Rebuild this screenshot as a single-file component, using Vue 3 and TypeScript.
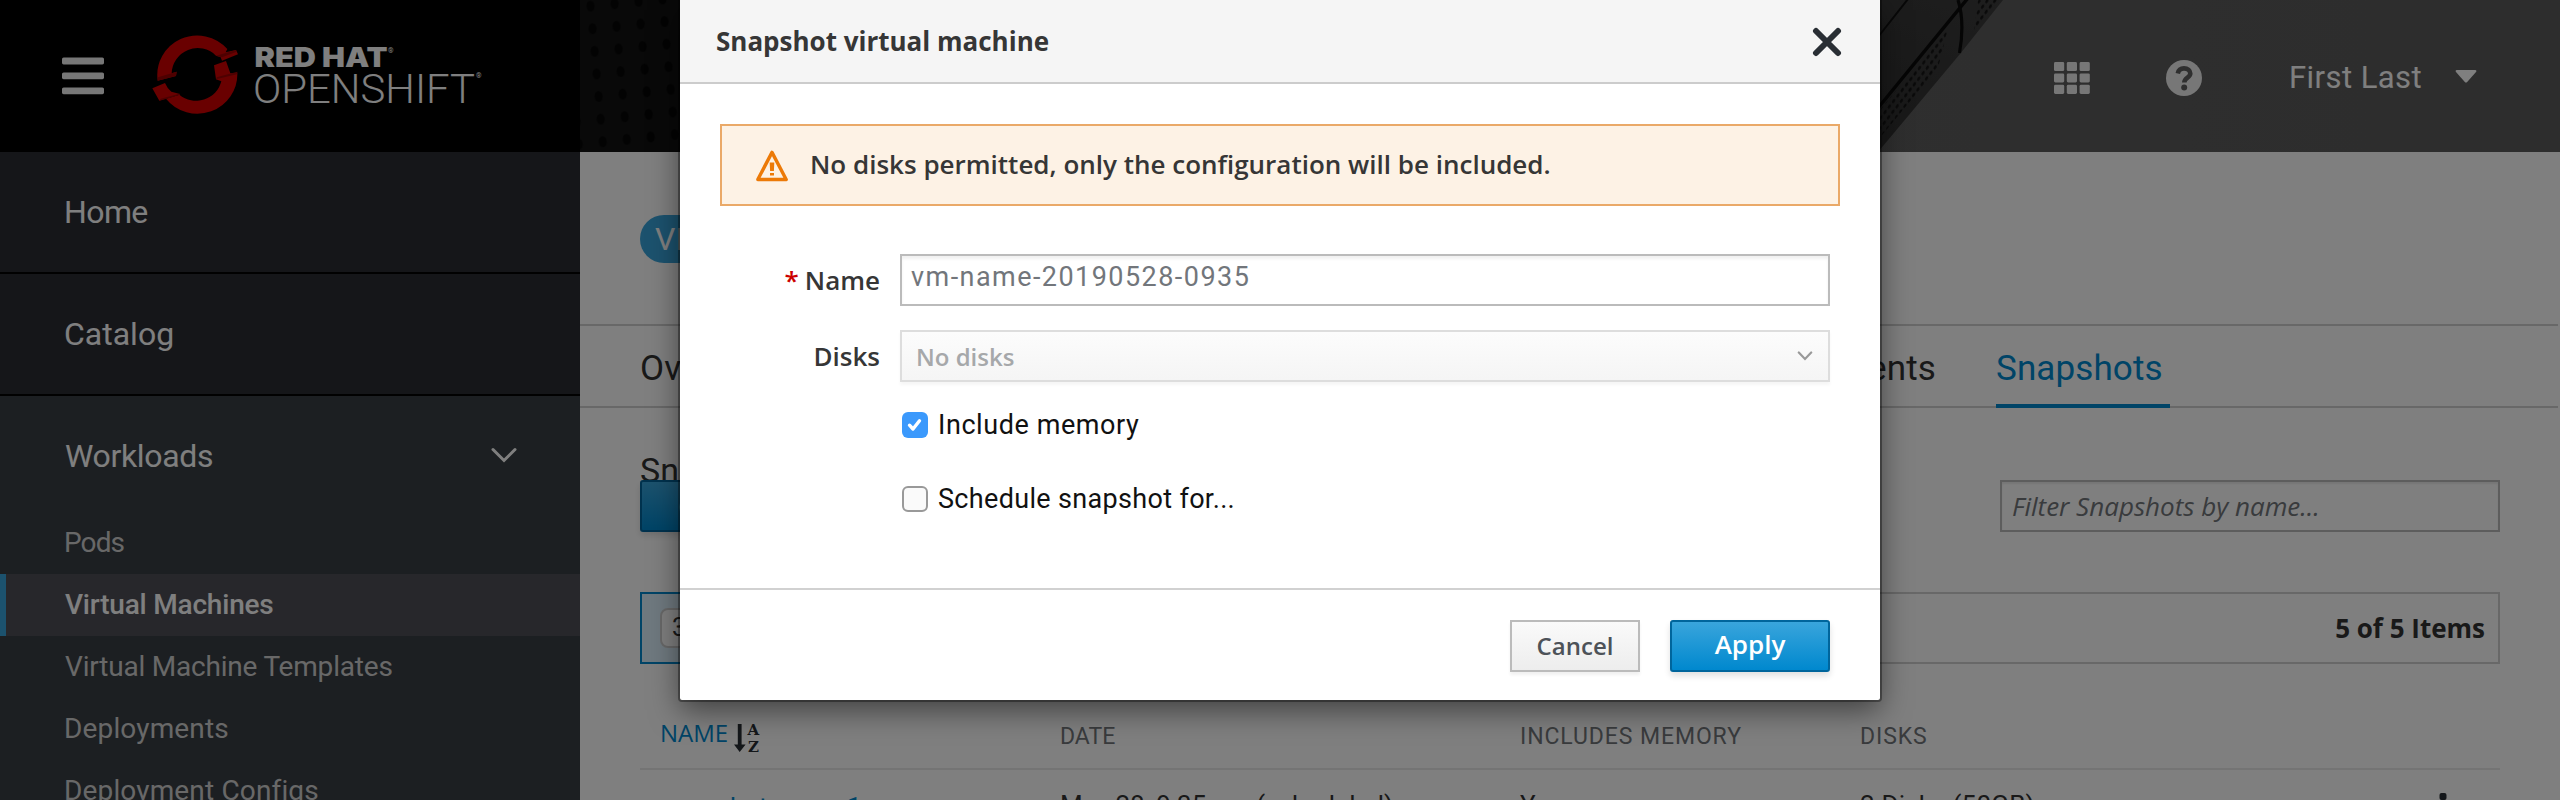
<script setup lang="ts">
import { ref } from 'vue'

interface NavChild {
  label: string
  active?: boolean
  tracking: string
}

const workloads: NavChild[] = [
  { label: 'Pods', tracking: 'tight' },
  { label: 'Virtual Machines', active: true, tracking: 'snug' },
  { label: 'Virtual Machine Templates', tracking: 'snug' },
  { label: 'Deployments', tracking: 'loose' },
  { label: 'Deployment Configs', tracking: 'loose' },
]

const name = ref('vm-name-20190528-0935')
const includeMemory = ref(true)
const schedule = ref(false)

const cells = [0, 1, 2].flatMap((r) => [0, 1, 2].map((c) => ({ x: c * 12.8, y: r * 11.4 })))
</script>

<template>
  <div class="app">
    <header class="masthead">
      <div class="brand">
        <svg class="burger" width="42" height="38" viewBox="0 0 42 38">
          <rect y="0.6" width="42" height="6.8" rx="1.6" />
          <rect y="15.4" width="42" height="6.8" rx="1.6" />
          <rect y="30.4" width="42" height="6.8" rx="1.6" />
        </svg>
        <svg class="logo" width="340" height="90" viewBox="0 0 340 90">
          <g transform="translate(-12 -10) scale(0.33333)">
            <path fill="#d20000" d="M53 182A120 119 0 0 1 262 87L257 97L288 90L294 103L246 122L242 112L228 107A78 78 0 0 0 95 160L110 155L108 168Z" />
            <path fill="#d20000" d="M292 158A120 119 0 0 1 78 236L118 224A78 78 0 0 0 244 184L228 178L222 136L258 123L271 160Z" />
            <path fill="#d20000" d="M37 205L75 189Q82 206 94 215L120 222L58 242Z" />
            <path fill="#9c0000" d="M53 182L54 172L110 155L108 168Z" />
            <path fill="#9c0000" d="M228 178L230 172L292 155L291 163Z" />
            <path fill="#9c0000" d="M228 107L288 90L290 95L246 112Z" />
            <path fill="#9c0000" d="M58 242L62 236L118 221L120 224L78 237Z" />
          </g>
          <g transform="translate(-152 -30)" fill="#fff">
            <text class="logo-bold" x="254.5" y="67.3" textLength="133" lengthAdjust="spacingAndGlyphs">RED HAT</text>
            <text class="logo-light" x="253" y="102.5" textLength="222" lengthAdjust="spacingAndGlyphs">OPENSHIFT</text>
            <text class="logo-mark" x="388" y="52.5">®</text>
            <text class="logo-mark" x="476" y="78">®</text>
          </g>
        </svg>
      </div>
      <div class="tools">
        <svg class="backdrop" width="1980" height="152" viewBox="0 0 1980 152">
          <defs>
            <pattern id="dots" width="24" height="22.6" patternUnits="userSpaceOnUse" patternTransform="matrix(1 -0.1 0.09 1 -2.5 -4)">
              <ellipse cx="12" cy="11.3" rx="4" ry="5.4" fill="#060606" />
            </pattern>
            <pattern id="holes" width="7" height="6" patternUnits="userSpaceOnUse" patternTransform="rotate(-52) skewX(-18)">
              <rect x="1" y="1.4" width="4.4" height="2.6" rx="1.3" fill="#141414" />
            </pattern>
            <linearGradient id="sky" x1="0" x2="1" y1="0" y2="0">
              <stop offset="0" stop-color="#646464" />
              <stop offset="0.4" stop-color="#5e5e5e" />
              <stop offset="1" stop-color="#5a5a5a" />
            </linearGradient>
            <linearGradient id="wall" x1="0" x2="1" y1="1" y2="0">
              <stop offset="0" stop-color="#2a2a2a" />
              <stop offset="1" stop-color="#3c3c3c" />
            </linearGradient>
          </defs>
          <rect width="700" height="152" fill="#121212" />
          <rect width="700" height="152" fill="url(#dots)" />
          <rect x="700" width="1280" height="152" fill="url(#sky)" />
          <g transform="translate(1290 0)">
            <path fill="url(#wall)" d="M-200 0H133L90 54L8 152H-200Z" />
            <path fill="url(#holes)" d="M78 28L68 68L8 140V112Z" />
            <path fill="url(#holes)" d="M108 0H130L104 32Z" />
            <path d="M98 -2L8 108" stroke="#0a0a0a" stroke-width="3.4" fill="none" />
            <path d="M38 -1L8 37" stroke="#101010" stroke-width="2" fill="none" />
            <path d="M88 0Q95 22 89.500 53" stroke="#0a0a0a" stroke-width="3.2" fill="none" />
          </g>
        </svg>
        <svg class="grid-icon" width="36" height="32" viewBox="0 0 36 32">
          <rect v-for="(c, i) in cells" :key="i" :x="c.x" :y="c.y" width="10.2" height="9.1" rx="1.4" />
        </svg>
        <svg class="help-icon" width="36" height="36" viewBox="0 0 36 36">
          <circle cx="18" cy="18" r="18" fill="#efefef" />
          <path d="M11.800 13.400C12.600 9.800 15 8.400 18 8.400C21.600 8.400 24.300 10.500 24.300 13.600C24.300 17.600 18.300 17.600 18.300 22.400" fill="none" stroke="#5e5e5e" stroke-width="4.600" />
          <circle cx="18.200" cy="27.600" r="3" fill="#5e5e5e" />
        </svg>
        <span class="user">First Last</span>
        <svg class="caret" width="22" height="13" viewBox="0 0 22 13">
          <path d="M1.500 0H20.500Q22 0.400 21.200 1.800L12.200 12Q11 13 9.800 12L0.800 1.800Q0 0.400 1.500 0Z" fill="#fff" />
        </svg>
      </div>
    </header>

    <div class="body">
      <nav class="sidebar">
        <a class="nav-item snugger">Home</a>
        <a class="nav-item">Catalog</a>
        <div class="nav-open">
          <div class="nav-title">
            <span>Workloads</span>
            <svg width="26" height="16" viewBox="0 0 26 16">
              <path d="M2 2.500L13 13.500L24 2.500" fill="none" stroke="#fff" stroke-width="3" stroke-linecap="round" />
            </svg>
          </div>
          <a v-for="n in workloads" :key="n.label" class="nav-child" :class="[n.tracking, { active: n.active }]">{{ n.label }}</a>
        </div>
      </nav>

      <main class="content">
        <div class="resource"><span class="badge">VM</span></div>
        <div class="tabs">
          <span class="tab">Overview</span>
          <span class="tab events">Events</span>
          <span class="tab current">Snapshots</span>
        </div>
        <div class="pane">
          <h2 class="heading">Snapshots</h2>
          <div class="toolbar">
            <span class="create">Create Snapshot</span>
            <span class="filter">Filter Snapshots by name...</span>
          </div>
          <div class="summary">
            <div class="summary-left"><span class="chip">3</span></div>
            <b class="count">5 of 5 Items</b>
          </div>
          <div class="grid thead">
            <div class="sorted">
              <span>NAME</span>
              <svg width="28" height="30" viewBox="0 0 28 30">
                <path d="M3.800 1H7.600V21.500H11.600L5.700 29L0 21.500H3.800Z" />
                <text x="13.500" y="12">A</text>
                <text x="14" y="29">Z</text>
              </svg>
            </div>
            <span>DATE</span>
            <span class="wide">INCLUDES MEMORY</span>
            <span class="wide">DISKS</span>
          </div>
          <div class="grid row">
            <a class="link">snapshot-name-1</a>
            <span>May 28, 9:35 am (scheduled)</span>
            <span>Yes</span>
            <span class="disks">2 Disks (50GB)</span>
            <svg class="kebab" width="8" height="34" viewBox="0 0 8 34">
              <rect x="0.500" width="7" height="7" rx="2" />
              <rect x="0.500" y="13" width="7" height="7" rx="2" />
              <rect x="0.500" y="26" width="7" height="7" rx="2" />
            </svg>
          </div>
        </div>
      </main>
    </div>

    <div class="overlay">
      <section class="modal">
        <div class="modal-head">
          <h1>Snapshot virtual machine</h1>
          <svg width="30" height="30" viewBox="0 0 30 30">
            <path d="M4 4L26 26M26 4L4 26" stroke="#292e34" stroke-width="6" stroke-linecap="round" />
          </svg>
        </div>
        <div class="modal-body">
          <div class="alert">
            <svg width="32" height="32" viewBox="0 0 32 32">
              <path d="M16 2.400L30.200 29.500H1.800Z" fill="none" stroke="#ec7a08" stroke-width="3.400" stroke-linejoin="round" />
              <path d="M13.700 12.500H18.300L17.900 21H14.100ZM14 23H18V25.600H14Z" fill="#ec7a08" />
            </svg>
            <span>No disks permitted, only the configuration will be included.</span>
          </div>
          <div class="field">
            <label><i>*</i>Name</label>
            <div class="input">{{ name }}</div>
          </div>
          <div class="field">
            <label>Disks</label>
            <div class="select">
              <span>No disks</span>
              <svg width="16" height="10" viewBox="0 0 16 10">
                <path d="M1.800 1.500L8 8L14.200 1.500" fill="none" stroke="#999" stroke-width="2.200" stroke-linecap="round" />
              </svg>
            </div>
          </div>
          <div class="checks">
            <div class="check" @click="includeMemory = !includeMemory">
              <span class="box" :class="{ on: includeMemory }">
                <svg v-if="includeMemory" width="26" height="26" viewBox="0 0 26 26">
                  <path d="M7.500 13.200L11 17L17.500 8.800" fill="none" stroke="#fff" stroke-width="3.400" stroke-linecap="round" stroke-linejoin="round" />
                </svg>
              </span>
              <span class="memory">Include memory</span>
            </div>
            <div class="check" @click="schedule = !schedule">
              <span class="box" :class="{ on: schedule }"></span>
              <span class="schedule">Schedule snapshot for...</span>
            </div>
          </div>
        </div>
        <div class="modal-foot">
          <button class="btn cancel">Cancel</button>
          <button class="btn apply">Apply</button>
        </div>
      </section>
    </div>
  </div>
</template>

<style>
body {
  overflow: hidden;
}
</style>

<style scoped>
.app {
  position: relative;
  width: 2560px;
  height: 800px;
  overflow: hidden;
  background: #fff;
  font-family: Roboto, sans-serif;
  color: #333;
}
svg {
  display: block;
  flex: none;
}
.app * {
  box-sizing: border-box;
}
.masthead {
  display: flex;
  height: 152px;
}
.brand {
  display: flex;
  align-items: flex-start;
  width: 580px;
  padding-left: 62px;
  background: #000;
}
.burger {
  margin-top: 57px;
  fill: #efefef;
}
.logo {
  margin: 30px 0 0 48px;
}
.logo-bold {
  font: 900 26.8px Inter, sans-serif;
}
.logo-light {
  font: 300 40px Roboto, sans-serif;
}
.logo-mark {
  font: 400 7px Roboto, sans-serif;
}
.tools {
  position: relative;
  display: flex;
  flex: 1;
  align-items: center;
  justify-content: flex-end;
  padding: 3px 83px 0 0;
}
.backdrop {
  position: absolute;
  left: 0;
  top: 0;
}
.grid-icon,
.help-icon,
.user,
.caret {
  position: relative;
}
.grid-icon {
  fill: #efefef;
}
.help-icon {
  margin-left: 76px;
}
.user {
  width: 140px;
  margin: 0 26px 0 87px;
  font-size: 31px;
  line-height: 40px;
  letter-spacing: 0.44px;
  color: #fff;
  white-space: nowrap;
}
.caret {
  margin-bottom: 3px;
}
.body {
  display: flex;
  height: 648px;
}
.sidebar {
  width: 580px;
  background: #2b2c33;
  color: #fff;
  overflow: hidden;
}
.nav-item {
  display: block;
  height: 122px;
  padding-left: 64px;
  border-bottom: 2px solid #030303;
  font-size: 32px;
  line-height: 120px;
}
.snugger {
  letter-spacing: -0.6px;
}
.nav-open {
  background: #393f44;
}
.nav-title {
  display: flex;
  align-items: center;
  justify-content: space-between;
  height: 116px;
  padding: 4px 63px 0 65px;
  font-size: 32px;
  letter-spacing: -0.35px;
}
.nav-title svg {
  margin-bottom: 2px;
}
.nav-child {
  display: block;
  height: 62px;
  padding-left: 64px;
  font-size: 28px;
  line-height: 62px;
  color: #d1d1d1;
}
.nav-child.tight {
  letter-spacing: -0.9px;
}
.nav-child.snug {
  padding-left: 65px;
  letter-spacing: -0.2px;
}
.nav-child.loose {
  letter-spacing: 0.15px;
}
.nav-child.active {
  padding-left: 59px;
  border-left: 6px solid #39a5dc;
  background: #4e4e56;
  color: #fff;
  font-weight: 500;
}
.content {
  flex: 1;
}
.resource {
  height: 174px;
  margin-right: 2px;
  padding: 63px 0 0 60px;
  border-bottom: 2px solid #d1d1d1;
}
.badge {
  display: block;
  width: 90px;
  height: 48px;
  padding-left: 15px;
  border-radius: 24px;
  background: #39a5dc;
  color: #fff;
  font-size: 32px;
  line-height: 49px;
}
.tabs {
  display: flex;
  height: 82px;
  margin-right: 2px;
  padding: 0 388px 0 60px;
  border-bottom: 2px solid #d1d1d1;
  font-size: 35px;
  line-height: 86px;
  letter-spacing: 0.12px;
}
.tab {
  height: 82px;
}
.events {
  margin: 0 60px 0 auto;
}
.current {
  width: 174px;
  border-bottom: 4px solid #0088ce;
  color: #0088ce;
}
.pane {
  padding: 0 60px;
}
.heading {
  height: 72px;
  margin: 0;
  overflow: hidden;
  font-size: 34px;
  font-weight: 400;
  line-height: 124px;
}
.toolbar {
  display: flex;
  justify-content: space-between;
  height: 52px;
}
.create {
  padding: 0 36px;
  border: 2px solid #00659c;
  border-radius: 3px;
  background: linear-gradient(#39a5dc, #0088ce);
  box-shadow: 0 4px 6px rgba(3, 3, 3, 0.12);
  color: #fff;
  font: 600 26px/48px 'Open Sans', sans-serif;
}
.filter {
  width: 500px;
  padding-left: 10px;
  border: 2px solid #bbb;
  box-shadow: inset 0 2px 2px rgba(3, 3, 3, 0.08);
  color: #72767b;
  font: italic 400 26px/48px 'Open Sans', sans-serif;
}
.summary {
  display: flex;
  justify-content: space-between;
  height: 72px;
  margin-top: 60px;
  border: 2px solid #d1d1d1;
  border-left: 0;
}
.summary-left {
  width: 300px;
  height: 72px;
  margin-top: -2px;
  padding: 14px 18px;
  border: 2px solid #0088ce;
  background: #def3ff;
}
.chip {
  display: block;
  width: 90px;
  height: 40px;
  padding-left: 10px;
  border: 2px solid #d1d1d1;
  border-radius: 8px;
  background: #fff;
  font-size: 25px;
  line-height: 36px;
}
.count {
  padding-right: 13px;
  font: 700 26px/69px 'Open Sans', sans-serif;
}
.grid {
  display: grid;
  grid-template-columns: 400px 460px 340px 1fr 61px;
  padding-left: 20px;
  white-space: nowrap;
}
.thead {
  height: 106px;
  padding-top: 40px;
  border-bottom: 2px solid #e8e8e8;
  color: #72767b;
  font-size: 23px;
  line-height: 66px;
}
.thead > .wide {
  letter-spacing: 0.9px;
}
.sorted {
  display: flex;
  gap: 7px;
}
.sorted span {
  color: #0088ce;
  font: 400 24px/58px 'Open Sans', sans-serif;
}
.sorted svg {
  margin: 19px 0 0 -1px;
  fill: #292e34;
  font: 700 15px 'DejaVu Serif', serif;
}
.row {
  font-size: 26px;
  line-height: 71px;
}
.link {
  color: #0088ce;
  line-height: 74px;
}
.disks {
  letter-spacing: 0.2px;
}
.kebab {
  margin-top: 23px;
  fill: #292e34;
}
.overlay {
  position: absolute;
  inset: 0;
  background: rgba(0, 0, 0, 0.5);
}
.modal {
  width: 1200px;
  height: 700px;
  margin: 0 auto;
  background: #fff;
  border-radius: 0 0 2px 2px;
  box-shadow: 0 0 0 2px rgba(0, 0, 0, 0.35), 0 10px 30px rgba(0, 0, 0, 0.5);
  color: #363636;
  font-family: 'Open Sans', sans-serif;
}
.modal-head {
  display: flex;
  justify-content: space-between;
  height: 84px;
  padding: 0 38px 0 36px;
  border-bottom: 2px solid #ccc;
  background: #f5f5f5;
}
.modal-head h1 {
  margin: 0;
  font-size: 26px;
  font-weight: 700;
  line-height: 82px;
}
.modal-head svg {
  margin-top: 27px;
}
.modal-body {
  height: 504px;
  padding: 40px 50px 0 40px;
}
.alert {
  display: flex;
  gap: 22px;
  width: 1120px;
  height: 82px;
  margin-bottom: 48px;
  padding-left: 34px;
  border: 2px solid #eaa968;
  background: #fdf2e5;
  font-size: 26px;
  font-weight: 600;
  line-height: 77px;
}
.alert svg {
  margin-top: 24px;
}
.field {
  display: flex;
  justify-content: flex-end;
  gap: 20px;
  height: 52px;
  margin-bottom: 24px;
}
.field label {
  font-size: 26px;
  font-weight: 600;
  line-height: 52px;
}
.field i {
  margin-right: 6px;
  color: #c00;
  font-style: normal;
}
.input,
.select {
  width: 930px;
  border: 2px solid #bbb;
}
.input {
  padding-left: 9px;
  box-shadow: inset 0 3px 3px rgba(3, 3, 3, 0.06);
  color: #72767b;
  font: 400 27px/42px Roboto, sans-serif;
  letter-spacing: 1.45px;
}
.select {
  display: flex;
  align-items: center;
  justify-content: space-between;
  padding: 0 15px 0 14px;
  border-color: #ddd;
  background: linear-gradient(#fcfcfc, #f5f5f5);
  box-shadow: 0 3px 3px rgba(3, 3, 3, 0.04);
  color: #a6a8aa;
  font-size: 24px;
  font-weight: 600;
}
.checks {
  display: flex;
  flex-direction: column;
  gap: 48px;
  padding: 6px 0 0 182px;
}
.check {
  display: flex;
  align-items: center;
  gap: 10px;
  height: 26px;
  color: #111;
  font-family: Roboto, sans-serif;
  font-size: 27px;
}
.box {
  width: 26px;
  height: 26px;
  border: 2px solid #999;
  border-radius: 6px;
  background: #fafafa;
}
.box.on {
  border: 0;
  background: #3b99fc;
}
.memory {
  letter-spacing: 0.57px;
}
.schedule {
  letter-spacing: 0.33px;
}
.modal-foot {
  display: flex;
  justify-content: flex-end;
  gap: 30px;
  height: 112px;
  padding: 30px 50px 0 0;
  border-top: 2px solid #d1d1d1;
}
.btn {
  height: 52px;
  padding: 0;
  border: 2px solid #bbb;
  font: 600 24px/48px 'Open Sans', sans-serif;
}
.cancel {
  width: 130px;
  background: linear-gradient(#fafafa, #ededed);
  box-shadow: 0 3px 3px rgba(3, 3, 3, 0.06);
  color: #4d5258;
}
.apply {
  width: 160px;
  padding-bottom: 4px;
  border-color: #00659c;
  border-radius: 3px;
  background: linear-gradient(#39a5dc, #0088ce);
  box-shadow: 0 4px 6px rgba(3, 3, 3, 0.12);
  color: #fff;
  font-size: 26px;
  line-height: 44px;
}
</style>
